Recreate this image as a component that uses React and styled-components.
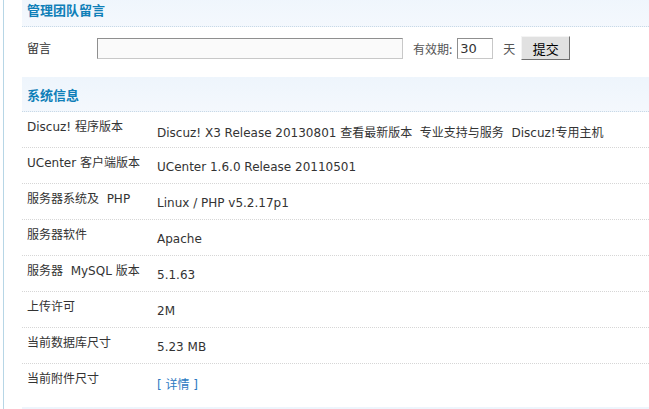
import React from "react";
import styled, { createGlobalStyle } from "styled-components";

const GlobalStyle = createGlobalStyle`
  html, body {
    margin: 0;
    padding: 0;
    background: #fff;
    overflow: hidden;
  }
  body {
    font-family: "DejaVu Sans", "Noto Sans CJK SC", sans-serif;
    font-size: 12px;
    color: #333;
  }
`;

const rows = [
  {
    label: "Discuz! 程序版本",
    value: "Discuz! X3 Release 20130801 查看最新版本  专业支持与服务  Discuz!专用主机",
  },
  { label: "UCenter 客户端版本", value: "UCenter 1.6.0 Release 20110501" },
  { label: "服务器系统及  PHP", value: "Linux / PHP v5.2.17p1" },
  { label: "服务器软件", value: "Apache" },
  { label: "服务器  MySQL 版本", value: "5.1.63" },
  { label: "上传许可", value: "2M" },
  { label: "当前数据库尺寸", value: "5.23 MB" },
  { label: "当前附件尺寸", value: "[ 详情 ]", link: true },
];

export default function App() {
  return (
    <>
      <GlobalStyle />
      <Frame>
        <Header $top>
          <Title>管理团队留言</Title>
        </Header>
        <FormRow>
          <FormLabel>留言</FormLabel>
          <TextInput type="text" defaultValue="" />
          <Hint>有效期:</Hint>
          <DaysInput type="text" defaultValue="30" />
          <Hint>天</Hint>
          <Button type="button">提交</Button>
        </FormRow>
        <Header>
          <Title>系统信息</Title>
        </Header>
        <Table>
          {rows.map((row) => (
            <Row key={row.label}>
              <Label>{row.label}</Label>
              <Value $link={row.link}>{row.value}</Value>
            </Row>
          ))}
        </Table>
        <Header />
      </Frame>
    </>
  );
}

const Frame = styled.div`
  margin-left: 3px;
  border-left: 1px solid #b7d6e6;
  padding-left: 18px;
  height: calc(100vh + 8px);
  overflow: hidden;
`;

const Header = styled.div`
  height: 34px;
  margin-top: ${(p) => (p.$top ? "-8px" : "0")};
  background: linear-gradient(#eef5fc, #f4f8fd);
  border-bottom: 1px dotted #c9d9e6;
  display: flex;
  align-items: center;
  padding-left: 5px;
`;

const Title = styled.h3`
  margin: 0;
  font-family: "Noto Sans CJK SC", sans-serif;
  font-size: 13px;
  font-weight: 700;
  color: #0f7fb8;
`;

const FormRow = styled.div`
  height: 40px;
  display: flex;
  align-items: center;
  padding: 1px 0 9px 5px;
`;

const FormLabel = styled.span`
  width: 70px;
  font-family: "Noto Sans CJK SC", sans-serif;
  margin-top: -1px;
`;

const inputBase = `
  box-sizing: border-box;
  height: 21px;
  border: 1px solid #c8c8c8;
  border-top-color: #8f8f8f;
  border-left-color: #8f8f8f;
  background: #fafafa;
  font-family: "DejaVu Sans", sans-serif;
  font-size: 13px;
  color: #333;
  padding: 0 2px;
  outline: none;
`;

const TextInput = styled.input`
  ${inputBase}
  width: 306px;
`;

const DaysInput = styled.input`
  ${inputBase}
  width: 36px;
  background: #fff;
`;

const Hint = styled.span`
  font-family: "Noto Sans CJK SC", sans-serif;
  color: #555;
  margin: 0 5px 0 10px;
`;

const Button = styled.button`
  box-sizing: border-box;
  width: 49px;
  height: 24px;
  margin-left: 1px;
  background: #e1e1e1;
  border: 1px solid #f4f4f4;
  border-right-color: #6f6f6f;
  border-bottom-color: #6f6f6f;
  font-family: "Noto Sans CJK SC", sans-serif;
  font-size: 13px;
  color: #000;
  padding: 0;
`;

const Table = styled.div`
  display: flex;
  flex-direction: column;
  padding-bottom: 8px;
`;

const Row = styled.div`
  height: 35px;
  display: flex;
  padding-left: 5px;
  border-bottom: 1px dotted #d6d6d6;

  &:last-child {
    border-bottom: none;
  }
`;

const Label = styled.div`
  width: 130px;
  flex-shrink: 0;
  padding-top: 6px;
  line-height: 18px;
  white-space: pre;
  font-family: "DejaVu Sans", "Noto Sans CJK SC", sans-serif;
`;

const Value = styled.div`
  align-self: center;
  padding-top: 3px;
  white-space: pre;
  color: ${(p) => (p.$link ? "#2b7ac2" : "#333")};
`;
